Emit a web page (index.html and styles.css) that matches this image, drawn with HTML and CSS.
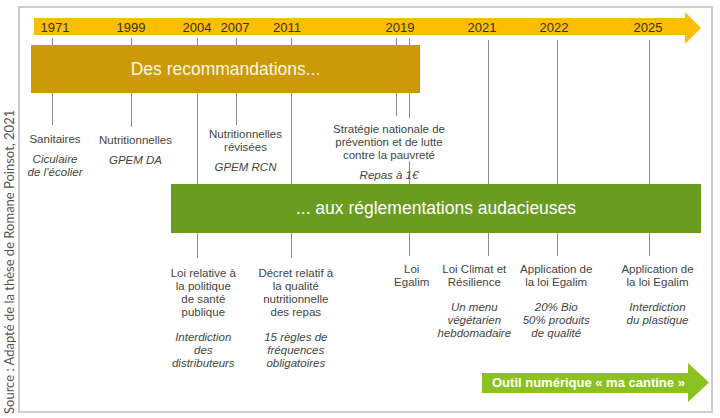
FILE: index.html
```html
<!DOCTYPE html>
<html lang="fr">
<head>
<meta charset="utf-8">
<title>Frise des réglementations</title>
<link rel="stylesheet" href="styles.css">
</head>
<body>
<div class="page">
  <div class="source">Source : Adapté de la thèse de Romane Poinsot, 2021</div>
  <div class="frame">
    <div class="axis">
      <div class="axis-bar"></div>
      <svg class="axis-head" viewBox="0 0 16 32"><polygon points="0,0 16,16 0,32" fill="#fdbd00"/></svg>
    </div>
    <div class="box box-reco">Des recommandations...</div>
    <div class="box box-regl">... aux réglementations audacieuses</div>
    <div class="tool">
      <div class="tool-body">Outil numérique « ma cantine »</div>
      <svg class="tool-head" viewBox="0 0 21 39"><polygon points="0,0 21,19.5 0,39" fill="#8cc21f"/></svg>
    </div>

    <div class="tick" style="left:32px;top:30px;height:87px"></div>
    <div class="tick" style="left:111px;top:30px;height:89px"></div>
    <div class="tick" style="left:177px;top:30px;height:220px"></div>
    <div class="tick" style="left:216px;top:30px;height:87px"></div>
    <div class="tick" style="left:271px;top:30px;height:220px"></div>
    <div class="tick" style="left:376px;top:30px;height:78px"></div>
    <div class="tick" style="left:389px;top:30px;height:80px"></div>
    <div class="tick" style="left:389px;top:153px;height:95px"></div>
    <div class="tick" style="left:468px;top:32px;height:216px"></div>
    <div class="tick" style="left:537px;top:32px;height:216px"></div>
    <div class="tick" style="left:629px;top:32px;height:216px"></div>

    <div class="year" style="left:35px">1971</div>
    <div class="year" style="left:111px">1999</div>
    <div class="year" style="left:177px">2004</div>
    <div class="year" style="left:215px">2007</div>
    <div class="year" style="left:267px">2011</div>
    <div class="year" style="left:380px">2019</div>
    <div class="year" style="left:462px">2021</div>
    <div class="year" style="left:534px">2022</div>
    <div class="year" style="left:628px">2025</div>

    <div class="label label-upper" style="left:35px;top:125px">
      <p>Sanitaires</p>
      <p class="note">Ciculaire<br>de l’écolier</p>
    </div>
    <div class="label label-upper" style="left:115.5px;top:125.5px">
      <p>Nutritionnelles</p>
      <p class="note">GPEM DA</p>
    </div>
    <div class="label label-upper" style="left:225.5px;top:120px">
      <p>Nutritionnelles<br>révisées</p>
      <p class="note">GPEM RCN</p>
    </div>
    <div class="label label-upper" style="left:369px;top:114.5px">
      <p>Stratégie nationale de<br>prévention et de lutte<br>contre la pauvreté</p>
      <p class="note">Repas à 1€</p>
    </div>

    <div class="label label-lower" style="left:183.3px;top:259px">
      <p>Loi relative à<br>la politique<br>de santé<br>publique</p>
      <p class="note">Interdiction<br>des<br>distributeurs</p>
    </div>
    <div class="label label-lower" style="left:275.8px;top:259px">
      <p>Décret relatif à<br>la qualité<br>nutritionnelle<br>des repas</p>
      <p class="note">15 règles de<br>fréquences<br>obligatoires</p>
    </div>
    <div class="label label-lower" style="left:391.7px;top:255px">
      <p>Loi<br>Egalim</p>
    </div>
    <div class="label label-lower" style="left:454.3px;top:255px">
      <p>Loi Climat et<br>Résilience</p>
      <p class="note">Un menu<br>végétarien<br>hebdomadaire</p>
    </div>
    <div class="label label-lower" style="left:536.2px;top:255px">
      <p>Application de<br>la loi Egalim</p>
      <p class="note">20% Bio<br>50% produits<br>de qualité</p>
    </div>
    <div class="label label-lower" style="left:637.5px;top:255px">
      <p>Application de<br>la loi Egalim</p>
      <p class="note">Interdiction<br>du plastique</p>
    </div>
  </div>
</div>
</body>
</html>
```

FILE: styles.css
```css
body {
  margin: 0;
  background: #ffffff;
  font-family: "Liberation Sans", Arial, sans-serif;
}

.page {
  display: flex;
  width: 720px;
  height: 418px;
}

.source {
  width: 18px;
  height: 418px;
  box-sizing: border-box;
  padding-top: 4px;
  writing-mode: vertical-rl;
  transform: rotate(180deg);
  font-family: Lato, "Open Sans", sans-serif;
  font-size: 13px;
  line-height: 18px;
  color: #555555;
  white-space: nowrap;
}

.frame {
  position: relative;
  margin-top: 6px;
  width: 695px;
  height: 407px;
  box-sizing: border-box;
  border: 2px solid #cdcdcd;
  padding-top: 4px;
  display: flex;
  flex-direction: column;
  align-items: flex-start;
}

.axis {
  display: flex;
  margin-left: 14px;
  height: 32px;
}

.axis-bar {
  width: 651px;
  height: 17px;
  margin-top: 6px;
  background: #fdbd00;
}

.axis-head {
  display: block;
  width: 16px;
  height: 32px;
}

.box {
  position: relative;
  z-index: 2;
  display: flex;
  align-items: center;
  justify-content: center;
  font-size: 17.5px;
  white-space: nowrap;
}

.box-reco {
  margin: 1px 0 0 11px;
  width: 389px;
  height: 48px;
  background: #cc9a06;
  color: #fff6e0;
}

.box-regl {
  margin: 91px 0 0 151px;
  width: 530px;
  height: 49px;
  background: #6b9b1f;
  color: #ffffff;
}

.tool {
  margin: 130px 0 0 462px;
  display: flex;
  align-items: center;
}

.tool-body {
  position: relative;
  z-index: 1;
  width: 206px;
  height: 20px;
  box-sizing: border-box;
  padding-left: 10px;
  background: #8cc21f;
  color: #ffffff;
  font-weight: bold;
  font-size: 13px;
  line-height: 20px;
  white-space: nowrap;
}

.tool-head {
  display: block;
  width: 21px;
  height: 39px;
}

.tick {
  position: absolute;
  z-index: 1;
  width: 1px;
  background: #8c8c8c;
}

.year {
  position: absolute;
  z-index: 3;
  top: 12px;
  transform: translateX(-50%);
  font-size: 13px;
  line-height: 16px;
  color: #333333;
}

.label {
  position: absolute;
  z-index: 3;
  transform: translateX(-50%);
  text-align: center;
  white-space: nowrap;
  font-size: 11.5px;
  color: #444444;
}

.label p {
  margin: 0;
}

.label-upper {
  line-height: 13.4px;
}

.label-upper .note {
  margin-top: 6.6px;
}

.label-lower {
  line-height: 13px;
}

.label-lower .note {
  margin-top: 12px;
}

.note {
  font-style: italic;
}
```
